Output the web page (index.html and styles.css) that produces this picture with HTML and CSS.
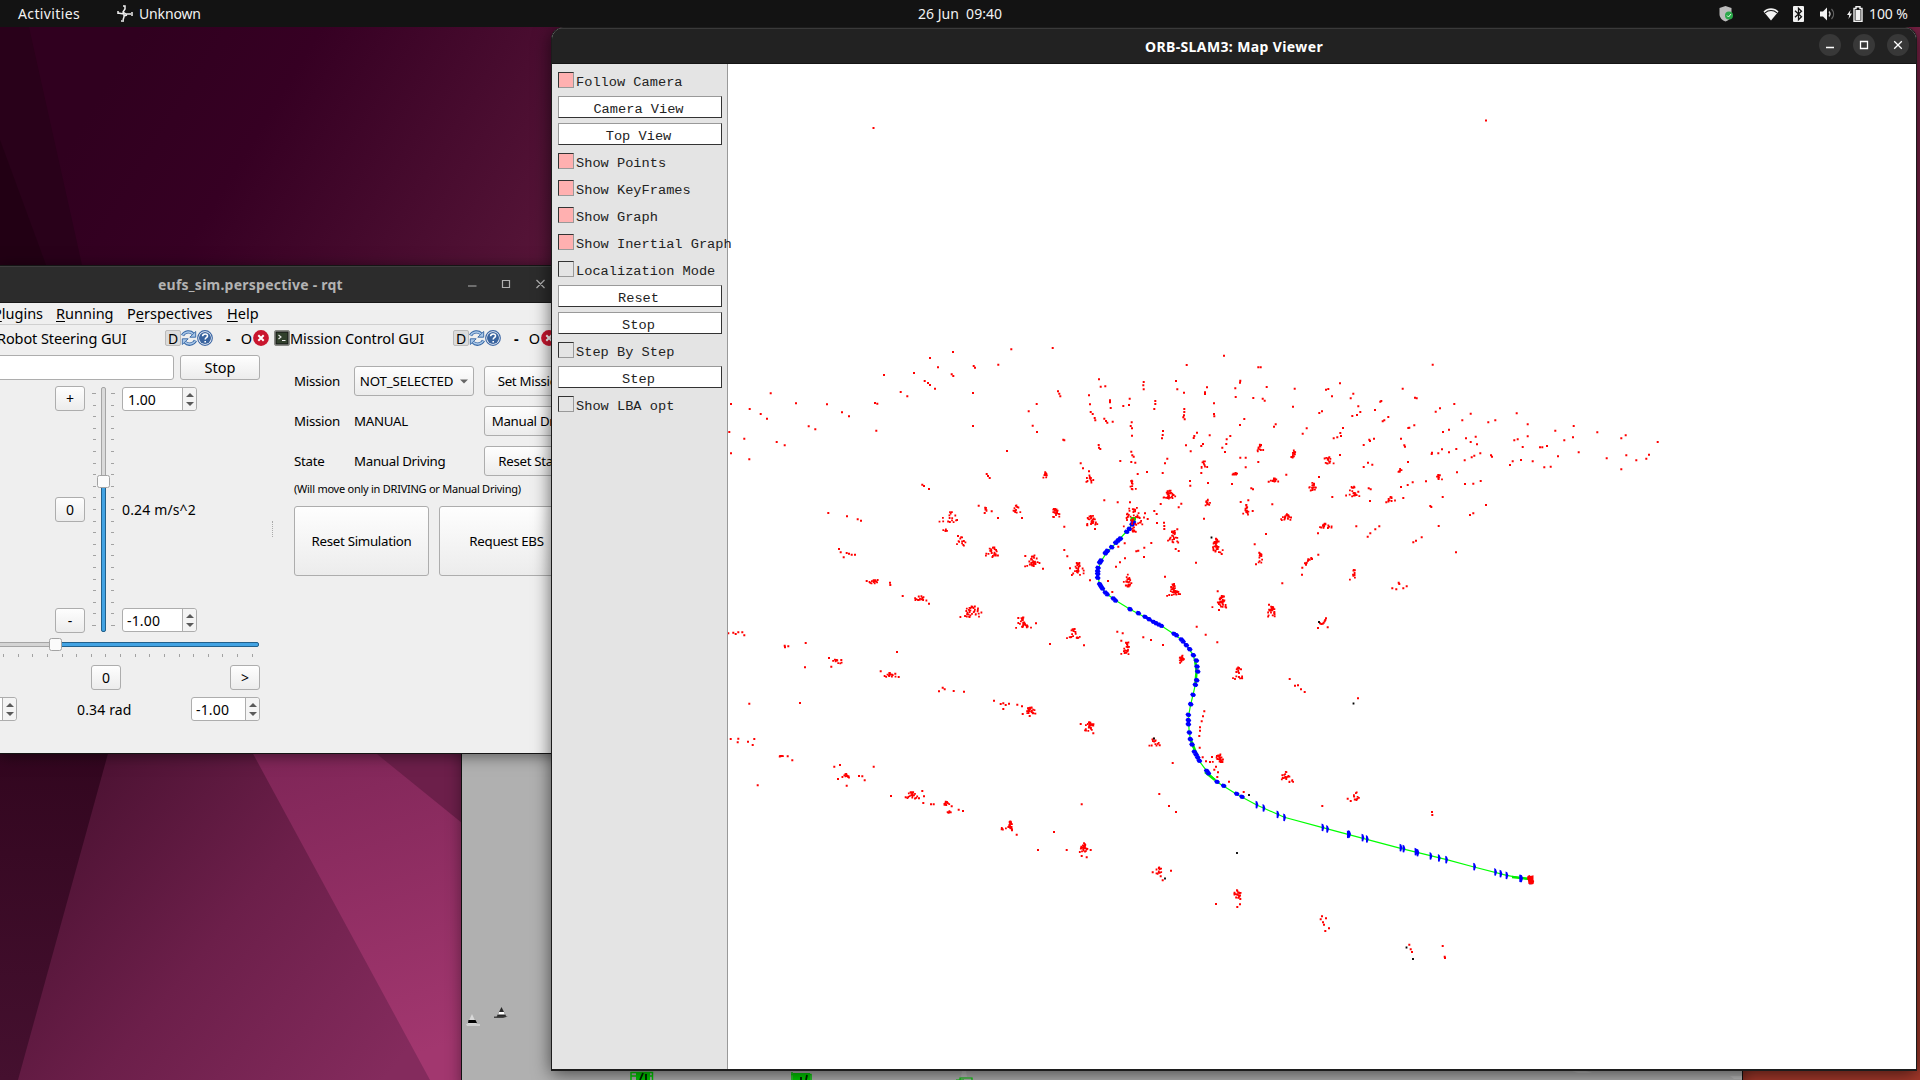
FILE: index.html
```html
<!DOCTYPE html>
<html lang="en">
<head>
<meta charset="utf-8">
<title>Desktop</title>
<link rel="stylesheet" href="styles.css">
</head>
<body>
<svg width="0" height="0" class="defs">
  <defs>
    <symbol id="refresh" viewBox="0 0 16 16"><path d="M1.500 5.500C4 1 9.500 1 11.800 3.600M14.500 10.500C12 15 6.500 15 4.200 12.400" fill="none" stroke="#3465a4" stroke-width="3.400"/><path d="M1.500 5.500C4 1 9.500 1 12 4M14.500 10.500C12 15 6.500 15 4 12" fill="none" stroke="#a9c7e8" stroke-width="1.500"/><path d="M14.700 1.500V7.200H8.800zM1.300 14.500V8.800H7.200z" fill="#a9c7e8" stroke="#3465a4" stroke-width=".9"/></symbol>
    <symbol id="help" viewBox="0 0 16 16"><circle cx="8" cy="8" r="7.300" fill="#fff" stroke="#3d67a5" stroke-width="1.200"/><circle cx="8" cy="8" r="6" fill="#3a649f"/><path d="M5.600 6.200C5.700 3.300 10.600 3.300 10.500 6c0 1.600-2.300 1.700-2.300 3.400M8.200 11v1.500" fill="none" stroke="#fff" stroke-width="1.600"/></symbol>
    <symbol id="close" viewBox="0 0 16 16"><circle cx="8" cy="8" r="7.900" fill="#c9152e"/><path d="M5.300 5.300l5.400 5.400M10.700 5.300l-5.400 5.400" stroke="#fff" stroke-width="2"/></symbol>
    <symbol id="term" viewBox="0 0 16 16"><rect x=".5" y=".5" width="15" height="15" rx="1.500" fill="#b5b7b0" stroke="#888a85"/><rect x="2" y="2" width="12" height="12" fill="#31402c" stroke="#111"/><path d="M4.500 5l2.500 2-2.500 2M8 10.500h3.500" fill="none" stroke="#eee" stroke-width="1.100"/></symbol>
    <linearGradient id="gTop" gradientUnits="userSpaceOnUse" x1="120" y1="60" x2="560" y2="330"><stop offset="0" stop-color="#30001f"/><stop offset=".3" stop-color="#360023"/><stop offset="1" stop-color="#5b183b"/></linearGradient>
    <linearGradient id="gLow" gradientUnits="userSpaceOnUse" x1="60" y1="780" x2="400" y2="1060"><stop offset="0" stop-color="#4a1131"/><stop offset=".5" stop-color="#6c1f4a"/><stop offset="1" stop-color="#842b5d"/></linearGradient>
    <linearGradient id="gHot" gradientUnits="userSpaceOnUse" x1="300" y1="753" x2="400" y2="1060"><stop offset="0" stop-color="#802658"/><stop offset="1" stop-color="#a2376f"/></linearGradient>
    <linearGradient id="gDark" x1="0" y1="0" x2="0" y2="1"><stop offset="0" stop-color="#32061f"/><stop offset="1" stop-color="#45102f"/></linearGradient>
  </defs>
</svg>

<svg class="wallpaper" viewBox="0 0 1920 1080">
  <rect width="1920" height="1080" fill="url(#gTop)"/>
  <path d="M0 27H29L82 265H0z" fill="#29011a"/>
  <path d="M0 140L46 265H0z" fill="#220014"/>
  <rect y="750" width="470" height="330" fill="url(#gLow)"/>
  <path d="M0 750H109L18 1080H0z" fill="url(#gDark)"/>
  <path d="M251 750H462V1080H430z" fill="url(#gHot)"/>
  <path d="M372 750H462V823z" fill="#6c1f4a"/>
  <rect x="1740" y="27" width="180" height="700" fill="#7a2145"/>
  <rect x="1740" y="700" width="180" height="380" fill="#a5392b"/>
</svg>

<header class="topbar">
  <span class="activities">Activities</span>
  <span class="app"><svg width="16" height="18" viewBox="0 0 16 18"><path d="M6 1h2v3l-2 3 3 2h5M15 7v4M7 9l-6-1M1 6v3M7 9v3l-1 3M4 16h3M10 10l-3 1" fill="none" stroke="#eee" stroke-width="1.500"/></svg>Unknown</span>
  <span class="clock">26 Jun&nbsp; 09:40</span>
  <span class="tray">
    <svg class="shield" width="14" height="16" viewBox="0 0 14 16"><path d="M6.500 0l6 2v6c0 4-3 6.500-6 7.500C3.500 14.500.5 12 .5 8V2z" fill="#bcbcbc"/><circle cx="10" cy="9.500" r="4" fill="#2ba84a"/><path d="M8 9.500l1.500 1.500 2.500-3" fill="none" stroke="#e8ffe8"/></svg>
    <svg class="wifi" width="16" height="14" viewBox="0 0 16 14"><path d="M8 13.500L.5 4.500C4.500.2 11.500.2 15.500 4.500z" fill="#f2f2f2"/><path d="M2 5.800c3.500-3 8.500-3 12 0" fill="none" stroke="#131313" stroke-width="1.100"/></svg>
    <svg class="bt" width="11" height="16" viewBox="0 0 11 16"><rect width="11" height="16" rx="1" fill="#f2f2f2"/><path d="M2 4.800l6.500 6-3 3V2.200l3 3-6.500 6" fill="none" stroke="#131313" stroke-width="1.300"/></svg>
    <svg class="vol" width="15" height="14" viewBox="0 0 15 14"><path d="M0 4.500h3L7 .5v13l-4-4H0z" fill="#f2f2f2"/><path d="M9 4.500c1.300 1.500 1.300 3.500 0 5" fill="none" stroke="#ccc" stroke-width="1.200"/><path d="M11.500 2c2.800 3 2.800 7 0 10" fill="none" stroke="#666" stroke-width="1.200"/></svg>
    <svg class="batt" width="16" height="16" viewBox="0 0 16 16"><path d="M3.500 4L0 9h2.200L1.500 13 5 7.500H2.800z" fill="#f2f2f2"/><path d="M7 2.500h2V.8h4v1.700h2v12.700H7z" fill="none" stroke="#f2f2f2" stroke-width="1.400"/><rect x="8.500" y="4" width="5" height="10" fill="#f2f2f2"/></svg>
    <span class="pct">100 %</span>
  </span>
</header>

<section class="simwin">
  <svg width="1281" height="330" viewBox="462 753 1281 330">
    <path d="M472 1014l5 11h-10z" fill="#d8d8d8"/><path d="M468.500 1020h7l1.500 3h-9z" fill="#050505"/><path d="M466 1024h14v2h-13z" fill="#d0d0d0"/>
    <path d="M501.500 1007l5 10h-10z" fill="#282828"/><path d="M499 1012h5l1 2.500h-7z" fill="#fff"/><path d="M494 1016.500h14l-5 1.500h-9z" fill="#444"/>
    <path d="M636 1073h14v7h-14zM793 1073h17v7h-17z" fill="#0c0"/>
    <g fill="none" stroke="#0c0" stroke-width="1.500"><path d="M630.500 1072.500h22v8M630.500 1076h22M631 1072v8M791 1074.500h20v6M792 1072v8"/><path d="M960 1082v-4h12v4M956 1080h8" stroke-width="1.200"/></g>
    <path d="M640 1080l3-7M646 1080v-6M801 1080v-3M806 1080l1-5" fill="none" stroke="#020" stroke-width="1.800"/>
    <path d="M962 1071h4l1 6h-6zM1132 1077l1 3M1572 1071h14l6 2h-14zM1730 1076h12v3h-8z" fill="#bdbdbd"/>
  </svg>
</section>

<section class="win rqt">
  <div class="titlebar"><span class="wtitle">eufs_sim.perspective - rqt</span>
    <svg class="wctl" width="78" height="14" viewBox="0 0 78 14"><path d="M0 9h8.500M34.500 3.500h7v7h-7zM68.500 3l8 8M76.500 3l-8 8" fill="none" stroke="#b0b0b0" stroke-width="1.200"/></svg></div>
  <nav class="menu"><span class="m1"><u>P</u>lugins</span><span class="m2"><u>R</u>unning</span><span class="m3">P<u>e</u>rspectives</span><span class="m4"><u>H</u>elp</span></nav>
  <div class="docks">
    <div class="dock steer">
      <div class="dockhead"><span class="dtitle s">Robot Steering GUI</span><b class="dbtn">D</b><svg width="16" height="16"><use href="#refresh"/></svg><svg width="16" height="16"><use href="#help"/></svg><span class="dash">-</span><span class="oh">O</span><svg width="16" height="16"><use href="#close"/></svg></div>
      <div class="topicrow"><div class="field topic"></div><div class="btn stop">Stop</div></div>
      <div class="speed">
        <div class="col btns"><div class="btn sq">+</div><div class="btn sq">0</div><div class="btn sq">-</div></div>
        <svg class="vslider" width="28" height="247" viewBox="90 386 28 247">
          <g id="vticks" stroke="#a2a2a2"></g>
          <rect x="101.500" y="387.500" width="4" height="244" rx="1.500" fill="#dadada" stroke="#a5a5a5"/>
          <rect x="101.500" y="484" width="4" height="147.500" rx="1.500" fill="#42a3e3" stroke="#22618c"/>
          <rect x="97.500" y="475.500" width="12" height="12" rx="2" fill="#fbfbfb" stroke="#a3a3a3"/>
        </svg>
        <div class="col vals"><div class="spin"><span>1.00</span><i></i></div><span class="now">0.24 m/s^2</span><div class="spin neg"><span>-1.00</span><i></i></div></div>
      </div>
      <svg class="hslider" width="262" height="22" viewBox="0 637 262 22">
        <rect x="-5" y="642.500" width="60" height="4" fill="#d4d4d4" stroke="#a5a5a5"/>
        <rect x="56" y="642.500" width="202.500" height="4" rx="1.500" fill="#42a3e3" stroke="#22618c"/>
        <rect x="49.500" y="638.500" width="12" height="12" rx="2" fill="#fbfbfb" stroke="#a3a3a3"/>
        <g id="hticks" stroke="#a2a2a2"></g>
      </svg>
      <div class="steerbtns"><div class="btn sq">0</div><div class="btn sq">&gt;</div></div>
      <div class="steervals"><div class="spin left"><span></span><i></i></div><span class="rad">0.34 rad</span><div class="spin right neg"><span>-1.00</span><i></i></div></div>
    </div>
    <div class="split"></div>
    <div class="dock mission">
      <div class="dockhead"><svg width="16" height="16"><use href="#term"/></svg><span class="dtitle m">Mission Control GUI</span><b class="dbtn">D</b><svg width="16" height="16"><use href="#refresh"/></svg><svg width="16" height="16"><use href="#help"/></svg><span class="dash">-</span><span class="oh">O</span><svg width="16" height="16"><use href="#close"/></svg></div>
      <div class="form">
        <span>Mission</span><div class="btn combo">NOT_SELECTED<svg width="8" height="5" viewBox="0 0 8 5"><path d="M0 .5h8L4 4.500z" fill="#666"/></svg></div><div class="btn">Set Mission</div>
        <span>Mission</span><span>MANUAL</span><div class="btn b2">Manual Drive</div>
        <span>State</span><span>Manual Driving</span><div class="btn">Reset State</div>
      </div>
      <div class="note">(Will move only in DRIVING or Manual Driving)</div>
      <div class="big"><div class="btn">Reset Simulation</div><div class="btn">Request EBS</div></div>
    </div>
  </div>
</section>

<section class="win slam">
  <div class="titlebar"><span class="wtitle">ORB-SLAM3: Map Viewer</span>
    <span class="rounds">
      <svg width="22" height="22" viewBox="0 0 22 22"><circle cx="11" cy="11" r="11"/><path d="M7 13.500h8"/></svg>
      <svg width="22" height="22" viewBox="0 0 22 22"><circle cx="11" cy="11" r="11"/><path d="M7.500 7.500h7v7h-7z"/></svg>
      <svg width="22" height="22" viewBox="0 0 22 22"><circle cx="11" cy="11" r="11"/><path d="M7.200 7.200l7.600 7.600M14.800 7.200l-7.600 7.600"/></svg>
    </span></div>
  <div class="view">
    <aside class="panel">
      <div class="row"><i class="chk on"></i>Follow Camera</div>
      <div class="row"><div class="pbtn">Camera View</div></div>
      <div class="row"><div class="pbtn">Top View</div></div>
      <div class="row"><i class="chk on"></i>Show Points</div>
      <div class="row"><i class="chk on"></i>Show KeyFrames</div>
      <div class="row"><i class="chk on"></i>Show Graph</div>
      <div class="row"><i class="chk on"></i>Show Inertial Graph</div>
      <div class="row"><i class="chk"></i>Localization Mode</div>
      <div class="row"><div class="pbtn">Reset</div></div>
      <div class="row"><div class="pbtn">Stop</div></div>
      <div class="row"><i class="chk"></i>Step By Step</div>
      <div class="row"><div class="pbtn">Step</div></div>
      <div class="row"><i class="chk"></i>Show LBA opt</div>
    </aside>
    <svg class="map" width="1188" height="1006" viewBox="728 64 1188 1006">
      <path id="graph" fill="none" stroke="#0f0" stroke-width="1.200"/>
      <path fill="none" stroke="#0e0" stroke-width="2.500" d="M1195.500 662L1196.500 672 1195.500 683M1190 738L1199 760M1205 772L1215 780M1512 877L1530 879"/>
      <path id="frames" fill="#00f"/>
      <path d="M1130.500 517h5.500v3.500h-5.500z" fill="#0d0"/>
      <path id="points" fill="#f00"/>
      <path id="localpts" fill="#000"/>
      <path d="M1527.500 876l2-1 1 1 3-.7v4.700l.7 1-.7 3-2 .6-3-.6-.5-3.500-1-2z" fill="#f00"/>
    </svg>
  </div>
</section>
<script src="map.js"></script>
</body>
</html>
```
FILE: styles.css
```css
* { box-sizing: border-box; }
body { margin: 0; width: 1920px; height: 1080px; overflow: hidden; position: relative; background: #30001f; font-family: "Noto Sans", "Open Sans", sans-serif; }
svg { display: block; flex: none; }
.defs, .wallpaper { position: absolute; left: 0; top: 0; }
.wallpaper { width: 1920px; height: 1080px; }
.topbar { position: relative; z-index: 5; height: 27px; background: #131313; color: #f2f2f2; font-size: 14px; display: grid; grid-template-columns: 1fr auto 1fr; align-items: center; line-height: 27px; }
.activities { padding-left: 18px; letter-spacing: .38px; grid-column: 1; grid-row: 1; }
.app { grid-column: 1; grid-row: 1; padding-left: 117px; display: flex; align-items: center; gap: 6px; letter-spacing: -.15px; }
.clock { grid-column: 2; letter-spacing: 0; position: relative; }
.tray { grid-column: 3; display: flex; align-items: center; justify-content: flex-end; padding-right: 12px; }
.wifi { margin-left: 30px; }
.bt { margin-left: 14px; }
.vol { margin-left: 16px; }
.batt { margin-left: 12px; }
.pct { margin-left: 6px; width: 39px; white-space: nowrap; letter-spacing: -.1px; }

.simwin { position: absolute; left: 461px; top: 600px; width: 1282px; height: 490px; background: #b0b0b0; border: 1px solid #111; padding-top: 152px; box-shadow: 0 0 14px rgba(0,0,0,.4); }
.win { position: absolute; overflow: hidden; }
.titlebar { display: flex; align-items: center; position: relative; font-weight: 700; }
.rqt { left: 0; top: 265px; width: 580px; height: 489px; background: #efefef; border: 1px solid #151515; border-left: 0; font-size: 14px; color: #000; box-shadow: 0 2px 14px rgba(0,0,0,.5); }
.rqt .titlebar { height: 37px; background: #2c2c2c; color: #b3b3b3; padding-left: 158px; border-top: 1px solid #3d3d3d; border-bottom: 1px solid #191919; }
.rqt .wtitle { width: 310px; letter-spacing: .24px; }
.rqt .wctl { margin-top: -2px; }
.menu { height: 22px; border-bottom: 1px solid #d0d0d0; display: flex; line-height: 21px; font-size: 14.5px; }
.menu u { text-underline-offset: 2px; }
.menu span { white-space: nowrap; flex: none; }
.m1 { width: 63px; margin-left: -7px; }
.m2 { width: 71px; }
.m3 { width: 100px; }
.docks { display: flex; }
.dock { flex: none; }
.steer { width: 271px; }
.mission { width: 305px; }
.dockhead { height: 30px; display: flex; align-items: center; font-size: 14.5px; white-space: nowrap; padding-bottom: 4px; }
.dtitle { flex: none; }
.dtitle.s { width: 168px; margin-left: -3px; letter-spacing: -.1px; }
.dtitle.m { width: 163px; letter-spacing: -.12px; }
.dbtn { width: 16px; height: 16px; background: #dcdcdc; border: 1px solid #bbb; border-radius: 2px; font-weight: 400; font-size: 14px; line-height: 15px; text-align: center; }
.dash { width: 27px; padding-left: 13px; font-weight: 700; }
.oh { width: 13px; text-align: center; }
.btn { border: 1px solid #adadad; border-radius: 3px; background: linear-gradient(#fefefe, #ececec); display: flex; align-items: center; justify-content: center; white-space: nowrap; }
.topicrow { display: flex; gap: 6px; height: 25px; }
.field { background: #fff; border: 1px solid #adadad; border-radius: 3px; }
.topic { width: 178px; margin-left: -4px; }
.stop { width: 80px; font-size: 14.500px; padding-bottom: 2px; }
.sq { width: 30px; height: 25px; }
.speed { display: flex; height: 247px; margin-top: 6px; padding-left: 55px; }
.col { display: flex; flex-direction: column; justify-content: space-between; }
.vslider { margin-left: 5px; }
.vals { margin-left: 4px; padding: 1px 0; }
.now { letter-spacing: .15px; }
.spin { width: 75px; height: 24px; border: 1px solid #adadad; border-radius: 3px; background: #fff; display: flex; justify-content: space-between; line-height: 23px; }
.spin span { padding-left: 5px; letter-spacing: 0; }
.spin.neg span { padding-left: 4px; letter-spacing: .15px; }
.spin i { width: 14px; border-left: 1px solid #adadad; background: #f4f4f4; border-radius: 0 3px 3px 0; display: flex; flex-direction: column; align-items: center; justify-content: center; gap: 5px; }
.spin i::before, .spin i::after { content: ""; border: 4px solid transparent; }
.spin i::before { border-bottom-color: #5a5a5a; border-top: 0; }
.spin i::after { border-top-color: #5a5a5a; border-bottom: 0; }
.hslider { margin-top: 4px; }
.steerbtns { display: flex; gap: 109px; margin-top: 6px; padding-left: 91px; }
.steervals { display: flex; margin-top: 7px; line-height: 25px; }
.spin.left { width: 22px; margin-left: -5px; }
.spin.right { width: 69px; }
.rad { width: 174px; padding-left: 60px; letter-spacing: .15px; }
.split { width: 3px; height: 16px; margin: 196px 2px 0 1px; border-left: 1px dotted #aaa; }
.dock.mission { margin-left: -1px; }
.form { display: grid; grid-template-columns: 60px 120px 95px; column-gap: 0; row-gap: 10px; grid-auto-rows: 30px; align-items: center; padding: 11px 0 0 20px; font-size: 13.300px; }
.form > span { white-space: nowrap; letter-spacing: -.3px; }
.form .btn { height: 30px; width: 95px; margin-left: 10px; letter-spacing: -.3px; }
.form .combo { width: 120px; margin-left: 0; gap: 7px; font-size: 13.300px; letter-spacing: -.15px; }
.note { padding-left: 20px; margin-top: 4px; font-size: 11px; line-height: 18px; letter-spacing: -.25px; white-space: nowrap; }
.big { display: flex; gap: 10px; padding-left: 20px; margin-top: 8px; font-size: 13.300px; }
.big .btn { width: 135px; height: 70px; letter-spacing: -.3px; }

.slam { left: 551px; top: 27px; width: 1366px; height: 1044px; border: 1px solid #1c1c1c; border-bottom-width: 2px; border-radius: 12px 12px 0 0; background: #fff; box-shadow: 0 3px 18px rgba(0,0,0,.6); }
.slam .titlebar { height: 36px; background: #222; color: #fff; font-size: 14px; letter-spacing: .38px; justify-content: center; border-top: 1px solid #3a3a3a; border-bottom: 1px solid #151515; }
.rounds { position: absolute; right: 7px; top: 5px; display: flex; gap: 12px; }
.rounds circle { fill: #383838; }
.rounds path { fill: none; stroke: #fff; stroke-width: 1.300; }
.view { display: flex; height: 1006px; }
.panel { width: 176px; flex: none; background: #e4e4e4; border-right: 1px solid #999; padding: 5px 0 0 6px; position: relative; z-index: 2; font: 13.660px "Liberation Mono", monospace; color: #222; border-bottom: 1px solid #999; }
.row { height: 27px; display: flex; white-space: nowrap; line-height: 27px; }
.chk { width: 16px; height: 16px; margin: 3px 2px 0 0; border: 1px solid #999; border-top-color: #333; border-left-color: #333; flex: none; }
.chk.on { background: #ffb0b0; }
.pbtn { width: 164px; height: 22px; background: #fff; border: 1px solid #333; border-top-color: #999; border-left-color: #999; text-align: center; line-height: 25px; padding-right: 3px; }
```
FILE: map.js
```js
// Map points: "x y" is a single landmark, "x y w h n" a cone cluster; units are thirds of a pixel from the tile origin.
const tiles = [
  [720, 330, `33 222;89 237;122 252;141 266;152 190;228 220;321 223;366 247;387 259;266 289;286 298;28 306;73 326;170 336;194 346;33 370;88 388;469 302;465 219;472 221;492 135;582 129;542 186;562 199;614 153;624 159;630 165;645 176;630 84;654 112;699 66;695 133;700 138;761 108;765 113;835 104;874 58;998 54;759 189;759 288;861 363;926 244;950 222;938 287;951 306;1014 184;1018 191;1021 199;1030 329;1033 331;1137 148;1142 170;1156 169;1107 196;1110 223;1170 211;1170 217;1172 234;1210 228;1229 206;1227 225;1112 246;1118 252;1124 264;1126 271;1153 266;1158 273;1162 278;1178 275;1235 277;1232 288;1236 295;1236 317;1271 156;1270 166;1271 178;1306 213;1306 222;1303 237;1136 345;1137 353;1141 357;1234 365;1237 376;1241 380;1234 396;1246 398;1201 393;1082 400;1089 415;1107 424;1107 448 26 24 14;1253 432;1281 426;800 432;804 438;809 444;976 435 12 20 14;607 464;612 468;627 477;1236 466 18 28 14;1153 511;1193 517;1230 517;776 527;797 537 20 14 9;815 544;794 549;834 564;887 537 20 24 14;906 564;1006 549 24 26 28;1114 570 26 32 32;1125 597;1033 590;695 560 50 36 20;676 598 12 12 6;325 549;381 559;413 568;423 572;725 634 24 28 14;714 618;357 657;362 667;380 669;387 671;395 674;405 674;371 682;818 667 36 30 32;940 692 32 34 38;969 716;916 678;1033 660;1042 679;1075 717 30 40 28;1050 715;1110 751;464 754 32 12 16;440 753;510 758;511 765;548 798;600 805 32 14 18;627 821;757 846 60 34 46;912 878 34 32 34;948 880;895 864;908 865;1061 911 28 30 26;1092 946;990 942;1220 955 28 36 28;1192 905;1208 910;1204 932;1270 922;1293 930;25 910;40 908;47 912;55 907;67 907;73 916;194 947;205 949;257 939;195 952;531 966;327 984;350 990;1240 560 60 60 50;1240 600 16 18 12;1275 550;1283 567;1303 543;1310 552;1311 579;1214 640;1195 650;1215 685;1200 697;1188 710;1249 664;1255 662;1273 653;1294 639;1272 681;1164 753;1177 786;1225 752 26 38 28`],
  [1160, 330, `192 77;80 105;295 112;302 112;48 153;52 178;72 188;141 172;135 187;135 192;162 220;241 152;240 158;226 175;227 201;280 204;320 171;308 206;314 212;404 176;399 230;498 179;505 177;540 160;516 199;580 191;572 205;595 229;601 246;591 255;577 258;478 249;486 244;645 240;661 215;664 213;685 261;668 274;673 271;728 176;765 203;770 205;818 104;827 245;840 235;883 222;932 251;907 271;985 277;1006 271;1070 250;1103 283;1186 302;1241 288;1312 307;1384 325;1397 316;1493 336;1103 319;1239 322;1213 331;1063 331;1073 328;1088 351;1140 352;1147 352;1161 348;1194 379;1256 367;1340 385;1399 376;1384 418;1429 391;1459 386;1467 374;1153 412;1172 410;1118 394;1083 390;1058 394;1050 405;993 376;996 380;961 370;943 377;935 382;914 391;947 320;918 325;932 336;951 343;889 357;867 367;846 358;835 370;815 372;816 368;867 299;849 306;763 286;748 293;745 294;723 326;735 350;733 346;642 326;630 333;628 329;611 345;549 294;541 309;532 322;521 325;543 318;440 295;428 311;347 283;342 290;253 267;240 285;73 237;73 246;72 256;70 262;74 268;162 252;163 259;9 303;8 315;6 325;111 308;103 318;101 324;149 316;129 342;124 348;78 346;92 364;211 318;200 328;199 342;187 353;195 366;300 354 20 20 16;402 372 18 22 16;503 391 28 20 20;540 375;624 398;637 404;611 411;744 396;722 422 14 12 9;838 441 20 16 16;891 427;962 453;940 461;915 462;848 501;798 454;758 457;743 465;723 471;730 504;241 383;257 383;295 396;257 412;22 386;15 400;131 402 14 24 12;124 429;8 429;228 431 24 10 12;216 462;144 459;90 453;91 467;379 434;326 455;343 450 22 10 14;274 475;279 478;477 441;458 469 26 26 22;517 501;578 483 30 34 24;595 485;626 475;632 478;630 513;692 508 24 14 14;679 517;811 528;814 531;978 525;940 550;930 555;836 588;768 632;760 637;785 622;888 667;28 493 26 28 38;141 518 18 20 14;64 521;56 532;2 522;132 566;259 538 14 32 20;242 516;265 511;278 543;337 523;380 562 28 20 24;500 587 30 18 22;474 610;589 589;658 589;646 598;631 610;623 620;12 578;13 588;13 597;40 620 24 38 32;52 598;47 657;56 663;108 698;170 648 28 40 46;185 672;168 626;284 643;318 612;301 682 22 32 16;288 703;454 684;449 689;444 692;440 698;435 700;438 704;456 687;445 688;475 674;427 713;426 734;367 760;582 734 20 30 16;718 762;697 775;709 778;730 775;740 769;716 758;40 779 28 38 46;15 740;185 815 34 38 42;173 784;177 840;337 845 26 32 36;327 824;480 880;484 882;488 881;491 878;494 874;498 865;496 870;474 894;503 892;110 890;137 914;172 937;66 985 22 18 12;9 945`],
  [720, 620, `255 142;348 124 30 16 10;327 114;364 120;334 140;482 154;509 164 22 14 18;526 161;536 171;657 214;668 203;674 208;701 213;732 215;88 251;240 249;822 242;842 252;850 250;857 255;867 251;850 267;892 254;906 259;932 272 40 20 30;908 282;929 288;1110 319 32 28 36;1082 312;1120 340;32 357;55 356;53 367;84 365;103 357;98 375;183 409 16 6 8;203 409;217 421;113 496;343 440;360 435;354 477;380 497;380 467 22 12 16;417 468;427 469;434 481;461 440;513 528;575 526 28 20 24;557 532;607 513;612 529;597 535;610 549;633 553;641 553;678 550 18 14 16;695 559;687 577 14 8 8;716 569;729 573;872 616 24 24 30;847 626 12 6 6;890 644;876 631;954 690;1002 636;1040 690;1085 553;1092 683 22 28 32;1112 690;1100 712;1085 708`],
  [1120, 620, `183 120 26 20 14;357 160 24 38 26;509 177;525 197;534 196;543 208;554 216;714 235;253 274;249 289;245 304;240 322;240 332;238 348;239 383;103 366 26 22 16;119 376;158 429;298 415 26 28 32;248 412;258 424;270 426;276 411;288 440;283 449;294 457;292 471;327 485;371 516;497 472 30 34 28;118 522;147 558;168 576;607 558;708 528 28 24 14;683 536;692 543;936 576;937 585;117 752 20 24 18;153 752;98 757;122 769;128 781;352 822 26 26 26;361 837;360 853;352 861;288 852;602 898;606 889;618 895;609 907;612 914;627 925;616 933;868 974;872 988;876 996;968 978;974 1010;975 1014`]
];
let seed = 7;
const rnd = () => (seed = (seed * 16807) % 2147483647) / 2147483647;
const dot = (x, y, s = 2) => `M${(x - s / 2).toFixed(1)} ${(y - s / 2).toFixed(1)}h${s}v${s}h-${s}z`;
let red = dot(873.5, 128) + dot(1486, 120.5);
for (const [ox, oy, text] of tiles) {
  for (const item of text.split(";")) {
    const [x, y, w, h, n] = item.split(" ").map(Number);
    if (!n) { red += dot(ox + x / 3, oy + y / 3); continue; }
    for (let i = 0; i < n * 0.8; i++) {
      // cones are narrow at the top and spread at the base
      const v = rnd() - 0.5;
      const u = (rnd() + rnd() - 1) * (0.55 + v * 0.7);
      red += dot(ox + (x + u * w) / 3, oy + (y + v * h) / 3, 1.8);
    }
  }
}
document.getElementById("points").setAttribute("d", red);

const black = [[1211.5, 537.5], [1319, 622], [1154, 738.5], [1353.5, 703.5], [1249, 795], [1237, 853], [1165, 878.5], [1406.5, 947.5], [1413, 959]];
document.getElementById("localpts").setAttribute("d", black.map(p => dot(p[0], p[1], 1.8)).join(""));

// Camera trajectory, in thirds of a pixel
const abs = (ox, oy, list) => list.map(p => [ox + p[0] / 3, oy + p[1] / 3]);
const track = abs(720, 330, [[1240,566],[1232,588],[1218,606],[1195,632],[1160,668],[1142,695],[1133,725],[1138,762],[1158,790],[1185,810],[1230,838],[1275,862],[1325,888],[1365,914],[1388,932],[1408,958]])
  .concat(abs(1120, 620, [[220,106],[230,150],[228,185],[219,225],[212,253],[206,285],[206,313],[208,340],[216,375],[237,422],[263,457],[291,486],[350,523],[410,555],[493,592],[608,623],[740,658],[842,685],[980,719],[1062,741],[1160,766],[1230,779]]));
document.getElementById("graph").setAttribute("d", "M" + track.map(p => p.map(v => v.toFixed(1)).join(" ")).join("L"));

const diamonds = abs(720, 330, [[1240,576],[1236,584],[1228,597],[1220,606],[1201,626],[1194,632],[1187,639],[1175,652],[1162,663],[1156,670],[1143,692],[1139,698],[1134,714],[1133,724],[1133,732],[1133,744],[1139,763],[1143,770],[1147,776],[1156,788],[1161,793],[1180,806],[1186,812],[1230,838],[1255,850],[1275,861],[1287,868],[1300,876],[1308,880],[1316,884],[1324,888],[1362,912],[1369,916],[1384,929],[1389,935],[1399,946],[1409,958]])
  .concat(abs(1120, 620, [[220,106],[229,122],[231,140],[233,155],[230,181],[226,195],[219,225],[212,253],[205,285],[205,301],[205,313],[208,338],[211,358],[216,374],[223,396],[228,404],[233,413],[238,423],[260,453],[265,460],[291,486],[311,498],[350,522],[366,531]]));
const bars = abs(1120, 620, [[410,554],[431,564],[473,583],[493,592],[608,622],[622,627],[684,643],[688,642],[728,653],[741,657],[842,683],[851,686],[887,695],[893,698],[932,708],[957,714],[979,719],[1063,740],[1126,756],[1142,761],[1160,766],[1201,775],[1204,775],[1230,782]]);
let blue = "";
for (const [x, y] of diamonds) blue += `M${x - 2.9} ${y - .4}l1.500-2.100 2.900.4 1.500 2.200-1.500 2-2.900-.3z`;
for (const [x, y] of bars) blue += `M${x - 1.1} ${y - 3.9}l1.700.8 1.100 3-1.200 3.900-1.500-.2z`;
document.getElementById("frames").setAttribute("d", blue);

// Slider tick marks
const ns = "http://www.w3.org/2000/svg";
const tick = (parent, d) => { const p = document.createElementNS(ns, "path"); p.setAttribute("d", d); document.getElementById(parent).append(p); };
for (let i = 0; i <= 20; i++) {
  const y = Math.round(393 + i * 11.6) + .5, e = i % 20 ? 0 : 1;
  tick("vticks", `M${93 - e} ${y}h${3 + e}M111 ${y}h${3 + e}`);
}
for (let i = 0; i < 18; i++) tick("hticks", `M${Math.round(3 + i * 14.63) + .5} 654v3`);
```
